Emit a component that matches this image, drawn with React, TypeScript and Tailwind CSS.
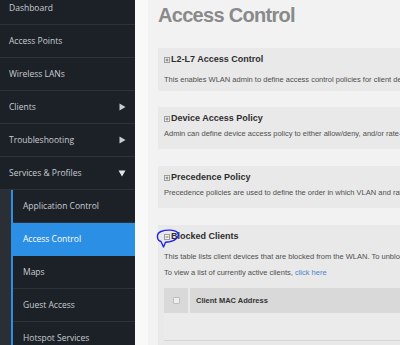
import React from "react";

function Tri({ down }: { down?: boolean }) {
  return down ? (
    <svg width="8" height="7" viewBox="0 0 8 7" className="ml-auto mr-[9px]">
      <path d="M0.5 0.5 L7.5 0.5 L4 6.5 Z" fill="#e2e4e7" />
    </svg>
  ) : (
    <svg width="7" height="8" viewBox="0 0 7 8" className="ml-auto mr-[9px]">
      <path d="M0.5 0.5 L6.5 4 L0.5 7.5 Z" fill="#c9ccd0" />
    </svg>
  );
}

function Box({ minus }: { minus?: boolean }) {
  return (
    <svg width="6" height="6" viewBox="0 0 6 6" className="shrink-0">
      <rect x="0.5" y="0.5" width="5" height="5" fill="#f4f4f4" stroke="#9c9c9c" strokeWidth="1" />
      <path d="M1.5 3 H4.5" stroke="#777" strokeWidth="1" />
      {!minus && <path d="M3 1.5 V4.5" stroke="#777" strokeWidth="1" />}
    </svg>
  );
}

function Header({ title, minus }: { title: string; minus?: boolean }) {
  return (
    <div className="flex items-center gap-[1px] h-[21px]">
      <Box minus={minus} />
      <span className="text-[9px] font-bold text-[#2e2e2e] whitespace-nowrap">{title}</span>
    </div>
  );
}

const top = [
  { t: "Dashboard" },
  { t: "Access Points" },
  { t: "Wireless LANs" },
  { t: "Clients", arrow: true },
  { t: "Troubleshooting", arrow: true },
  { t: "Services & Profiles", down: true },
];

const subs = ["Application Control", "Access Control", "Maps", "Guest Access", "Hotspot Services", "Firewall"];

export default function App() {
  return (
    <div className="w-[400px] h-[345px] overflow-hidden flex bg-[#f2f2f2]">
      <div className="w-[135px] shrink-0 h-full bg-[#1c2128] font-['Open_Sans',sans-serif] text-[8.5px] text-[#c8ccd1]">
        <div className="-mt-[8px]">
          {top.map((r) => (
            <div key={r.t} className="h-[33px] border-b border-[#2d333b] flex items-center pl-[9px]">
              <span>{r.t}</span>
              {r.arrow && <Tri />}
              {r.down && <Tri down />}
            </div>
          ))}
          <div className="flex">
            <div className="w-[11px] shrink-0 bg-[#2a2f36]" />
            <div className="w-[2px] shrink-0 bg-[#2f8fe6]" />
            <div className="flex-1">
              {subs.map((s) => (
                <div
                  key={s}
                  className={
                    s === "Access Control"
                      ? "h-[33px] flex items-center pl-[10px] bg-[#2c8fe6] text-white"
                      : "h-[33px] border-b border-[#2d333b] flex items-center pl-[10px]"
                  }
                >
                  {s}
                </div>
              ))}
            </div>
          </div>
        </div>
      </div>

      <div className="w-[13px] shrink-0 bg-[#f9f9f9]" />

      <div className="flex-1 min-w-0 pl-[10px] font-['Liberation_Sans',Arial,sans-serif]">
        <div className="pt-[4px] text-[20px] leading-[22px] font-bold text-[#8a8a8a] tracking-[-0.7px] whitespace-nowrap">
          Access Control
        </div>

        <div className="mt-[22px] w-[320px] bg-[#e9e9e9] px-[6px] pt-[1px] pb-[6px]">
          <Header title="L2-L7 Access Control" />
          <div className="mt-[5px] text-[7.5px] leading-[10px] text-[#4f4f4f] whitespace-nowrap">
            This enables WLAN admin to define access control policies for client devices.
          </div>
        </div>

        <div className="mt-[16px] w-[320px] bg-[#e9e9e9] px-[6px] pt-[1px] pb-[10px]">
          <Header title="Device Access Policy" />
          <div className="text-[7.5px] leading-[10px] text-[#4f4f4f] whitespace-nowrap">
            Admin can define device access policy to either allow/deny, and/or rate-limit client devices.
          </div>
        </div>

        <div className="mt-[17px] w-[320px] bg-[#e9e9e9] px-[6px] pt-[1px] pb-[10px]">
          <Header title="Precedence Policy" />
          <div className="text-[7.5px] leading-[10px] text-[#4f4f4f] whitespace-nowrap">
            Precedence policies are used to define the order in which VLAN and rate limit policies apply.
          </div>
        </div>

        <div className="relative mt-[17px] w-[320px] bg-[#e9e9e9] px-[6px] pt-[1px] pb-[20px]">
          <Header title="Blocked Clients" minus />
          <div className="mt-[5px] text-[7.5px] leading-[10px] text-[#4f4f4f] whitespace-nowrap">
            This table lists client devices that are blocked from the WLAN. To unblock a client, select it.
          </div>
          <div className="mt-[6px] text-[7.5px] leading-[10px] text-[#4f4f4f] whitespace-nowrap">
            To view a list of currently active clients, <span className="text-[#4a86c8]">click here</span>
          </div>
          <div className="mt-[10px] flex gap-[2px] h-[25px]">
            <div className="w-[24px] shrink-0 bg-[#d9d9d9] flex items-center justify-center">
              <div className="w-[7px] h-[7px] rounded-[1px] border border-[#bdbdbd] bg-[#eeeeee]" />
            </div>
            <div className="flex-1 bg-[#d9d9d9] flex items-center pl-[6px] text-[7.5px] font-bold text-[#333] whitespace-nowrap">
              Client MAC Address
            </div>
          </div>
          <div className="h-[28px] border-b border-[#d6d6d6] bg-[#ebebeb]" />

          <svg
            width="26"
            height="22"
            viewBox="0 0 26 22"
            className="absolute left-[-3px] top-[3px]"
          >
            <path
              d="M8.5 19 L6 13.5 C1.5 12 1 5.5 6 3.5 C11 1.5 19.5 1.5 22.5 4.5 C25 7.5 21.5 12.5 14.5 13.8 L10.5 14.2 Z"
              fill="none"
              stroke="#2323e8"
              strokeWidth="1.4"
              strokeLinejoin="round"
            />
          </svg>
        </div>
      </div>
    </div>
  );
}
